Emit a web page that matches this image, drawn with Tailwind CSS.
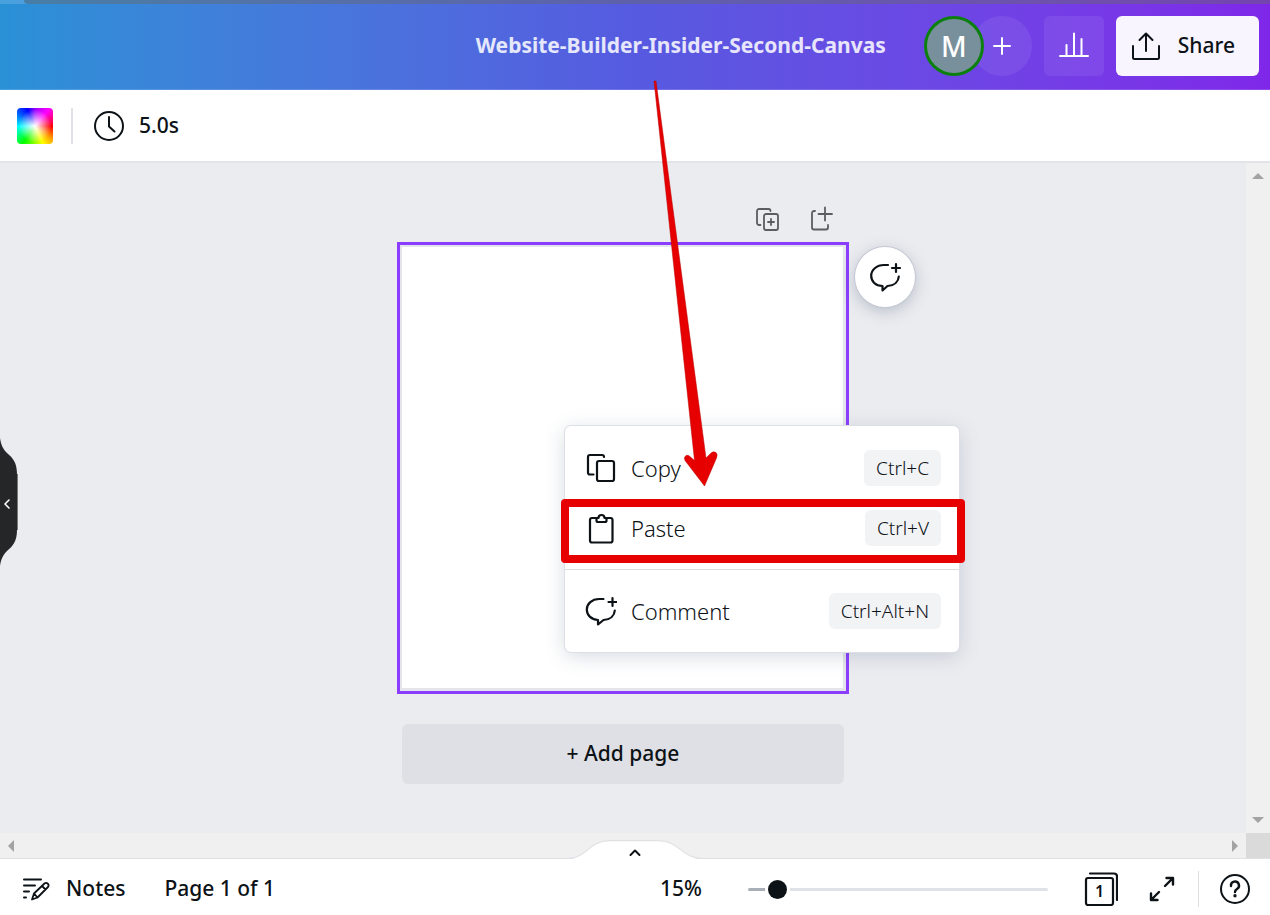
<!DOCTYPE html>
<html lang="en">

<head>
    <meta charset="UTF-8" />
    <meta name="viewport" content="width=device-width, initial-scale=1.0" />
    <title>Website-Builder-Insider-Second-Canvas</title>
    <script src="https://cdn.jsdelivr.net/npm/@tailwindcss/browser@4"></script>
</head>

<body class="flex min-h-screen flex-col bg-[#ebecf0] font-['Noto_Sans',sans-serif] text-[#0d1216]">

    <header class="relative border-b border-white/15 bg-linear-to-r from-[#2991d6] via-[#565ae0] to-[#7f27e9] pt-1">
        <!-- browser tab edge -->
        <div class="absolute inset-x-0 top-0 h-1 bg-white/15">
            <div class="ml-6 h-1 rounded-bl-sm bg-[#404040]/35"></div>
        </div>
        <div class="flex items-center justify-end pt-3 pr-[11px] pb-[13px]">
            <h1 class="mr-[38px] text-[21px] font-bold text-white/85">Website-Builder-Insider-Second-Canvas</h1>
            <div class="mr-3 flex">
                <button class="z-10 size-[60px] rounded-full border-3 border-[#0c800f] bg-[#78909c] text-[28px] leading-none font-medium text-white">M</button>
                <button aria-label="Add member" class="-ml-3 flex size-[60px] items-center justify-center rounded-full bg-white/7">
                    <svg class="size-5" viewBox="0 0 20 20" fill="none" stroke="#fff" stroke-width="2" stroke-linecap="round"><path d="M10 2v16M2 10h16" /></svg>
                </button>
            </div>
            <button aria-label="Insights" class="mr-3 flex size-[60px] items-center justify-center rounded-md bg-white/7">
                <svg class="size-8" viewBox="0 0 32 32" fill="none" stroke="#fff" stroke-width="2" stroke-linecap="round" stroke-linejoin="round"><path d="M2 26h28" /><path d="M8.500 26V15M16 26V3.500M23.500 26V9" /></svg>
            </button>
            <button class="flex h-[60px] items-center gap-4 rounded-md bg-[#f8f5fe] pr-6 pl-[14px] text-[21px] font-medium">
                <svg class="size-8" viewBox="0 0 32 32" fill="none" stroke="currentColor" stroke-width="2" stroke-linecap="round" stroke-linejoin="round"><path d="M3 16v11.500a1.500 1.500 0 0 0 1.500 1.500h23a1.500 1.500 0 0 0 1.500-1.500V16M16 21V3.500M9.500 10L16 3.500L22.500 10" /></svg>
                Share
            </button>
        </div>
    </header>

    <div class="flex h-[73px] items-center border-b-2 border-[#e2e4e8] bg-white pl-[17px]">
        <button aria-label="Background colour" class="size-9 rounded-sm bg-[radial-gradient(circle,#fff_0%,#fff0_65%),conic-gradient(from_0deg,#90f_0deg,#f0f_40deg,#f00_92deg,#fa0_130deg,#ff0_155deg,#0f0_215deg,#0ff_268deg,#05f_310deg,#00f_335deg,#90f_360deg)]"></button>
        <div class="mr-5 ml-[18px] h-9 w-0.5 bg-[#dfe3e8]"></div>
        <button class="flex items-center gap-[14px] text-[21px] font-medium">
            <svg class="size-8" viewBox="0 0 32 32" fill="none" stroke="currentColor" stroke-width="2" stroke-linecap="round" stroke-linejoin="round"><circle cx="16" cy="16" r="14" /><path d="M16 7v9.500l5.500 5" /></svg>
            5.0s
        </button>
    </div>

    <main class="grid flex-1 grid-cols-[1fr_24px] grid-rows-[1fr_25px]">
        <div class="relative flex flex-col items-center pt-[43px]">
            <button aria-label="Hide side panel" class="absolute top-[275px] left-0">
                <svg class="h-32 w-[18px]" viewBox="0 0 18 128" fill="none"><path d="M0 0C1 7 3 11 7 15C13 20 17 25 17 36V92C17 103 13 108 7 113C3 117 1 121 0 128Z" fill="#252627" /><path d="M17.500 36V92" stroke="#777" /><path d="M9 62L5 66L9 70" stroke="#fff" stroke-width="1.600" stroke-linecap="round" stroke-linejoin="round" /></svg>
            </button>

            <div class="mb-[10px] flex w-[452px] justify-end gap-[30px] pr-[13px] text-[#5b5d60]">
                <button aria-label="Duplicate page">
                    <svg class="size-[26px]" viewBox="0 0 26 26" fill="none" stroke="currentColor" stroke-width="1.800" stroke-linecap="round" stroke-linejoin="round"><path d="M6.500 19H5a2 2 0 0 1-2-2V5a2 2 0 0 1 2-2h9.500a2 2 0 0 1 2 2" /><rect x="10" y="8" width="14" height="16" rx="2" /><path d="M17 13v6M14 16h6" /></svg>
                </button>
                <button aria-label="Add page">
                    <svg class="size-[26px]" viewBox="0 0 26 26" fill="none" stroke="currentColor" stroke-width="1.800" stroke-linecap="round" stroke-linejoin="round"><path d="M5 5H4a2 2 0 0 0-2 2V21.500a2 2 0 0 0 2 2H16a2 2 0 0 0 2-2V19M15 1.500V14.500M8.500 8H22" /></svg>
                </button>
            </div>

            <div class="relative size-[452px] border-3 border-[#8b3dff] bg-[#e4e5ea] pt-0.5 pr-[3px] pb-[3px] pl-0.5">
                <div class="size-full bg-white"></div>

                <button aria-label="Comment on page" class="absolute top-0.5 left-[455px] flex size-[60px] items-center justify-center rounded-full bg-white shadow-[0_0_0_1px_#c5c8d4,0_4px_16px_#40577050]">
                    <svg class="size-8" viewBox="0 0 32 32" fill="none" stroke="currentColor" stroke-width="2.200" stroke-linecap="round" stroke-linejoin="round"><path d="M19 4H15C7.500 4 2.200 9 2.200 14.800C2.200 20.500 6.500 24.800 13.500 25V29.500L18.500 25C25.500 24.500 29.500 20.500 29.800 15.500M27 3v8M23 7h8" /></svg>
                </button>

                <div role="menu" class="absolute top-[181px] left-[165px] w-[394px] rounded-md bg-white text-[#0d1216] shadow-[0_0_0_1px_#dddfe6,0_4px_20px_#40577038]">
                    <div class="pt-3 pb-[11px]">
                        <button role="menuitem" class="flex h-[60px] w-full items-center pr-[18px] pl-5 text-[22px] font-light">
                            <svg class="mr-[14px] size-8" viewBox="0 0 32 32" fill="none" stroke="currentColor" stroke-width="2.200" stroke-linecap="round" stroke-linejoin="round"><path d="M8.500 22.500H5a2 2 0 0 1-2-2V5a2 2 0 0 1 2-2H17a2 2 0 0 1 2 2" /><rect x="12" y="9" width="17" height="20" rx="2" /></svg>
                            Copy
                            <kbd class="ml-auto rounded-md bg-[#f2f3f5] px-3 font-['Noto_Sans',sans-serif] text-[19px] leading-9">Ctrl+C</kbd>
                        </button>
                        <button role="menuitem" class="flex h-[60px] w-full items-center pr-[18px] pl-5 text-[22px] font-light">
                            <svg class="mr-[14px] size-8" viewBox="0 0 32 32" fill="none" stroke="currentColor" stroke-width="2.200" stroke-linecap="round" stroke-linejoin="round"><path d="M10.500 6H7a2 2 0 0 0-2 2V28.500a2 2 0 0 0 2 2H25.500a2 2 0 0 0 2-2V8a2 2 0 0 0-2-2H22" /><path d="M11.500 6H13.500A3 3 0 0 1 19.500 6H21.500V8.500a1.500 1.500 0 0 1-1.500 1.500H13a1.500 1.500 0 0 1-1.500-1.500Z" /></svg>
                            Paste
                            <kbd class="ml-auto rounded-md bg-[#f2f3f5] px-3 font-['Noto_Sans',sans-serif] text-[19px] leading-9">Ctrl+V</kbd>
                        </button>
                    </div>
                    <div class="border-t border-[#dcdee2] py-[11px]">
                        <button role="menuitem" class="flex h-[60px] w-full items-center pr-[18px] pl-5 text-[22px] font-light">
                            <svg class="mr-[14px] size-8" viewBox="0 0 32 32" fill="none" stroke="currentColor" stroke-width="2.200" stroke-linecap="round" stroke-linejoin="round"><path d="M18.500 4H14C7 4 1.800 9 1.800 14.500C1.800 20 6 24.500 13 25V29.500L18.500 25C25.500 24.500 29.500 20.500 29.800 15.500M27.500 3v8M23.500 7h8" /></svg>
                            Comment
                            <kbd class="ml-auto rounded-md bg-[#f2f3f5] px-3 font-['Noto_Sans',sans-serif] text-[19px] leading-9">Ctrl+Alt+N</kbd>
                        </button>
                    </div>
                </div>

                <!-- annotations -->
                <div class="pointer-events-none absolute top-[254px] left-[161px] h-16 w-[404px] rounded-[4px] border-8 border-[#e60000]"></div>
                <svg class="pointer-events-none absolute -top-[165px] left-[235px] h-[408px] w-[100px]" viewBox="0 0 100 408" fill="none">
                    <path d="M19 1L21 1L71 378L75.500 373.500Q78 370.500 81 372.500Q83 374.500 81.500 378L69.500 406L50 380.500Q48.500 377 51 375.500Q53.500 374.500 55.500 377L59.500 380.500Z" fill="#e60000" stroke="#b00" stroke-width=".5" />
                </svg>
            </div>

            <button class="mt-[30px] mb-12 h-[60px] w-[442px] rounded-md bg-[#dfe0e5] text-[21px] font-medium">+ Add page</button>
        </div>

        <!-- scrollbars -->
        <div class="flex flex-col items-center justify-between bg-[#f0f0f0] py-[10px] text-[#a3a3a3]">
            <svg class="h-[6px] w-3" viewBox="0 0 12 6" fill="currentColor"><path d="M0 6L6 0L12 6Z" /></svg>
            <svg class="h-[6px] w-3" viewBox="0 0 12 6" fill="currentColor"><path d="M0 0L6 6L12 0Z" /></svg>
        </div>
        <div class="flex items-center justify-between bg-[#f0f0f0] px-2 text-[#a3a3a3]">
            <svg class="h-3 w-[6px]" viewBox="0 0 6 12" fill="currentColor"><path d="M6 0L0 6L6 12Z" /></svg>
            <svg class="h-3 w-[6px]" viewBox="0 0 6 12" fill="currentColor"><path d="M0 0L6 6L0 12Z" /></svg>
        </div>
        <div class="bg-[#dadada]"></div>
    </main>

    <footer class="relative flex h-[57px] items-center border-t border-[#dfe1e5] bg-white pt-1 pr-[19px] pl-5 text-[21px] font-medium">
        <button aria-label="Show pages" class="absolute -top-[19px] left-1/2 -translate-x-1/2">
            <svg class="h-5 w-[150px]" viewBox="0 0 150 20" fill="none"><path d="M0 19.500H6C28 19.500 28 1.500 50 1.500H98C120 1.500 121 19.500 144 19.500H150V21H0Z" fill="#fff" /><path d="M0 18.500H6C28 18.500 28 .5 50 .5H98C120 .5 121 18.500 144 18.500H150" stroke="#dfe1e5" /><path d="M70.500 15L75 10.500L79.500 15" stroke="#0d1216" stroke-width="2" stroke-linecap="round" stroke-linejoin="round" /></svg>
        </button>
        <button class="flex items-center gap-[14px]">
            <svg class="size-8" viewBox="0 0 32 32" fill="none" stroke="currentColor" stroke-width="2" stroke-linecap="round" stroke-linejoin="round"><path d="M4 6.500H21M4 12.500H15M4 18.500H9M4 24.500H6" /><path d="M12 26.500L14 20.500L24.500 10.500A2.500 2.500 0 0 1 28 14L17.500 24.500ZM22 13L25.500 16.500M14 20.500L17.500 24.500" stroke-width="1.800" /></svg>
            Notes
        </button>
        <span class="ml-[39px]">Page 1 of 1</span>
        <button class="mr-[46px] ml-auto">15%</button>
        <input type="range" min="0" max="100" value="7" aria-label="Zoom" class="h-5 w-[300px] appearance-none bg-transparent [&::-webkit-slider-runnable-track]:h-[3px] [&::-webkit-slider-runnable-track]:rounded-full [&::-webkit-slider-runnable-track]:bg-[linear-gradient(90deg,#a9afb7_9%,#dfe3e8_9%)] [&::-webkit-slider-thumb]:-mt-2 [&::-webkit-slider-thumb]:size-[19px] [&::-webkit-slider-thumb]:appearance-none [&::-webkit-slider-thumb]:rounded-full [&::-webkit-slider-thumb]:bg-[#0d1216] [&::-webkit-slider-thumb]:shadow-[0_0_0_3px_#fff]" />
        <button aria-label="Grid view" class="relative ml-9">
            <svg class="size-[34px]" viewBox="0 0 34 34" fill="none" stroke="currentColor" stroke-width="2.200" stroke-linecap="round" stroke-linejoin="round"><rect x="2" y="6" width="27" height="27" rx="2" /><path d="M6 1.500H30a3 3 0 0 1 3 3V28" /></svg>
            <span class="absolute top-[9px] left-[11px] text-base leading-5 font-semibold">1</span>
        </button>
        <button aria-label="Full screen" class="ml-[29px]">
            <svg class="size-[30px]" viewBox="0 0 30 30" fill="none" stroke="currentColor" stroke-width="2.400" stroke-linecap="round" stroke-linejoin="round"><path d="M19.500 4H26V10.500M26 4L18 12M4 19.500V26H10.500M4 26L12 18" /></svg>
        </button>
        <div class="mr-5 ml-[21px] h-9 w-px bg-[#dcdee2]"></div>
        <button aria-label="Help" class="flex size-8 items-center justify-center">
            <svg class="size-8" viewBox="0 0 32 32" fill="none" stroke="currentColor" stroke-width="2" stroke-linecap="round" stroke-linejoin="round"><circle cx="16" cy="16" r="14" /><path d="M12 13A4 4 0 1 1 18 16C16.500 17 16 17.500 16 19" stroke-width="2.400" /><circle cx="16" cy="22.800" r=".7" fill="currentColor" /></svg>
        </button>
    </footer>

</body>
</html>
